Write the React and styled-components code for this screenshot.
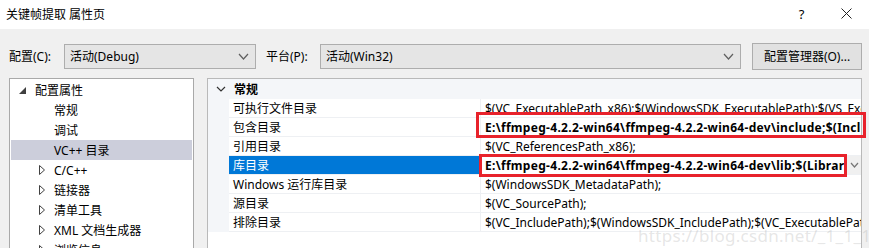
import React from "react";
import styled, { createGlobalStyle } from "styled-components";

const GlobalStyle = createGlobalStyle`
  html, body {
    margin: 0;
    padding: 0;
    width: 869px;
    height: 248px;
    overflow: hidden;
    background: #f0f0f0;
    font-family: "Noto Sans", "Noto Sans CJK SC", sans-serif;
    font-size: 12px;
    color: #000;
  }
`;

const Dialog = styled.div`
  width: 869px;
  height: 248px;
  display: flex;
  flex-direction: column;
  overflow: hidden;
  position: relative;
`;

const TitleBar = styled.div`
  height: 29px;
  flex: none;
  background: #fff;
  display: flex;
  align-items: center;
  padding: 0 0 2px 6px;
  box-sizing: border-box;
`;

const Title = styled.div`
  flex: 1;
  font-size: 12px;
`;

const TitleButton = styled.div`
  width: 45px;
  display: flex;
  justify-content: center;
  font-size: 13px;
`;

const Body = styled.div`
  flex: 1;
  min-height: 0;
  display: flex;
  flex-direction: column;
  padding: 14px 7px 0 9px;
  gap: 9px;
`;

const Toolbar = styled.div`
  display: flex;
  align-items: center;
  height: 26px;
`;

const Label = styled.div`
  width: ${(p) => p.$w}px;
  flex: none;
`;

const Select = styled.div`
  width: ${(p) => p.$w}px;
  height: 25px;
  box-sizing: border-box;
  border: 1px solid #adadad;
  background: #e5e5e5;
  display: flex;
  align-items: center;
  padding: 0 6px 0 5px;
  margin-right: ${(p) => p.$mr || 0}px;
  flex: none;
`;

const SelectText = styled.div`
  flex: 1;
`;

const Button = styled.div`
  width: 110px;
  height: 27px;
  box-sizing: border-box;
  border: 1px solid #adadad;
  background: #e1e1e1;
  display: flex;
  align-items: center;
  justify-content: center;
  flex: none;
`;

const Panels = styled.div`
  flex: 1;
  min-height: 0;
  display: flex;
  gap: 13px;
`;

const Tree = styled.div`
  width: 185px;
  flex: none;
  border: 1px solid #a9a9a9;
  border-bottom: none;
  background: #fff;
  padding: 1px 1px 0 1px;
  box-sizing: border-box;
  overflow: hidden;
`;

const TreeRow = styled.div`
  height: 20px;
  display: flex;
  align-items: center;
  background: ${(p) => (p.$selected ? "#cccedb" : "transparent")};
`;

const Twisty = styled.div`
  width: ${(p) => p.$w}px;
  flex: none;
  display: flex;
  justify-content: flex-end;
  padding-right: 9px;
  box-sizing: border-box;
`;

const Grid = styled.div`
  flex: 1;
  min-width: 0;
  border: 1px solid #b9b9b9;
  border-bottom: none;
  background: #fff;
  position: relative;
`;

const GroupRow = styled.div`
  height: 20px;
  display: flex;
  align-items: center;
  background: #f4f6f9;
  font-weight: bold;
`;

const GroupChevron = styled.div`
  width: 24px;
  flex: none;
  display: flex;
  justify-content: center;
  padding-left: 1px;
`;

const PropRow = styled.div`
  height: 19px;
  display: flex;
`;

const Gutter = styled.div`
  width: 21px;
  flex: none;
  background: #f4f6f9;
`;

const NameCell = styled.div`
  width: 252px;
  flex: none;
  box-sizing: border-box;
  border-bottom: 1px solid #eef0f3;
  border-right: 1px solid #eef0f3;
  padding-left: 4px;
  display: flex;
  align-items: center;
  background: ${(p) => (p.$selected ? "#0078d7" : "#fff")};
  color: ${(p) => (p.$selected ? "#fff" : "#000")};
`;

const ValueCell = styled.div`
  flex: 1;
  min-width: 0;
  position: relative;
  box-sizing: border-box;
  border-bottom: 1px solid #eef0f3;
  display: flex;
  align-items: center;
`;

const ValueText = styled.div`
  flex: 1;
  min-width: 0;
  overflow: hidden;
  white-space: nowrap;
  padding-left: 4px;
  font-weight: ${(p) => (p.$bold ? "bold" : "normal")};
  letter-spacing: ${(p) => (p.$bold ? "0.3px" : "0")};
`;

const DropButton = styled.div`
  width: 14px;
  height: 18px;
  flex: none;
  background: #f0f0f0;
  display: flex;
  align-items: center;
  justify-content: center;
`;

const Highlight = styled.div`
  position: absolute;
  left: ${(p) => p.$l}px;
  right: ${(p) => p.$r}px;
  top: ${(p) => p.$t}px;
  bottom: ${(p) => p.$b}px;
  border: 3px solid #e8222b;
  pointer-events: none;
`;

const Watermark = styled.div`
  position: absolute;
  left: 638px;
  top: 224px;
  font-size: 17px;
  color: rgba(170, 170, 170, 0.3);
  white-space: nowrap;
  letter-spacing: 0.3px;
  pointer-events: none;
`;

const Chevron = ({ color = "#606060", w = 9, h = 5 }) => (
  <svg width={w + 2} height={h + 2} viewBox={`0 0 ${w + 2} ${h + 2}`}>
    <polyline
      points={`1,1 ${(w + 2) / 2},${h + 1} ${w + 1},1`}
      fill="none"
      stroke={color}
      strokeWidth="1.2"
    />
  </svg>
);

const Expanded = () => (
  <svg width="7" height="7" viewBox="0 0 7 7">
    <polygon points="7,0 7,7 0,7" fill="#404040" />
  </svg>
);

const Collapsed = () => (
  <svg width="6" height="10" viewBox="0 0 6 10">
    <polygon points="0.5,0.5 5.5,5 0.5,9.5" fill="#fff" stroke="#404040" strokeWidth="1" />
  </svg>
);

const tree = [
  { label: "配置属性", level: 0, open: true },
  { label: "常规", level: 1 },
  { label: "调试", level: 1 },
  { label: "VC++ 目录", level: 1, selected: true },
  { label: "C/C++", level: 1, closed: true },
  { label: "链接器", level: 1, closed: true },
  { label: "清单工具", level: 1, closed: true },
  { label: "XML 文档生成器", level: 1, closed: true },
  { label: "浏览信息", level: 1, closed: true },
];

const props = [
  { name: "可执行文件目录", value: "$(VC_ExecutablePath_x86);$(WindowsSDK_ExecutablePath);$(VS_ExecutablePath);$(MSBuild_ExecutablePath)" },
  { name: "包含目录", value: "E:\\ffmpeg-4.2.2-win64\\ffmpeg-4.2.2-win64-dev\\include;$(IncludePath)", bold: true, box: { l: -5, r: -5, t: -6, b: -2 } },
  { name: "引用目录", value: "$(VC_ReferencesPath_x86);" },
  { name: "库目录", value: "E:\\ffmpeg-4.2.2-win64\\ffmpeg-4.2.2-win64-dev\\lib;$(LibraryPath)", bold: true, selected: true, drop: true, box: { l: -2, r: 14, t: -2, b: -3 } },
  { name: "Windows 运行库目录", value: "$(WindowsSDK_MetadataPath);" },
  { name: "源目录", value: "$(VC_SourcePath);" },
  { name: "排除目录", value: "$(VC_IncludePath);$(WindowsSDK_IncludePath);$(VC_ExecutablePath_x86);$(VS_ExecutablePath)" },
];

export default function App() {
  return (
    <>
      <GlobalStyle />
      <Dialog>
        <TitleBar>
          <Title>关键帧提取 属性页</Title>
          <TitleButton>?</TitleButton>
          <TitleButton>
            <svg width="11" height="11" viewBox="0 0 11 11">
              <path d="M0.5 0.5 L10.5 10.5 M10.5 0.5 L0.5 10.5" stroke="#222" strokeWidth="1" />
            </svg>
          </TitleButton>
        </TitleBar>
        <Body>
          <Toolbar>
            <Label $w={55}>配置(C):</Label>
            <Select $w={192} $mr={10}>
              <SelectText>活动(Debug)</SelectText>
              <Chevron />
            </Select>
            <Label $w={54}>平台(P):</Label>
            <Select $w={421} $mr={11}>
              <SelectText>活动(Win32)</SelectText>
              <Chevron />
            </Select>
            <Button>配置管理器(O)...</Button>
          </Toolbar>
          <Panels>
            <Tree>
              {tree.map((t) => (
                <TreeRow key={t.label} $selected={t.selected}>
                  <Twisty $w={t.level === 0 ? 24 : 43}>
                    {t.open && <Expanded />}
                    {t.closed && <Collapsed />}
                  </Twisty>
                  <span>{t.label}</span>
                </TreeRow>
              ))}
            </Tree>
            <Grid>
              <GroupRow>
                <GroupChevron>
                  <Chevron color="#333" w={8} h={4} />
                </GroupChevron>
                <span style={{ marginLeft: 1 }}>常规</span>
              </GroupRow>
              {props.map((p) => (
                <PropRow key={p.name}>
                  <Gutter />
                  <NameCell $selected={p.selected}>{p.name}</NameCell>
                  <ValueCell>
                    <ValueText $bold={p.bold}>{p.value}</ValueText>
                    {p.drop && (
                      <DropButton>
                        <Chevron color="#777" w={7} h={4} />
                      </DropButton>
                    )}
                    {p.box && <Highlight $l={p.box.l} $r={p.box.r} $t={p.box.t} $b={p.box.b} />}
                  </ValueCell>
                </PropRow>
              ))}
            </Grid>
          </Panels>
        </Body>
        <Watermark>https://blog.csdn.net/_1_1_1_</Watermark>
      </Dialog>
    </>
  );
}
